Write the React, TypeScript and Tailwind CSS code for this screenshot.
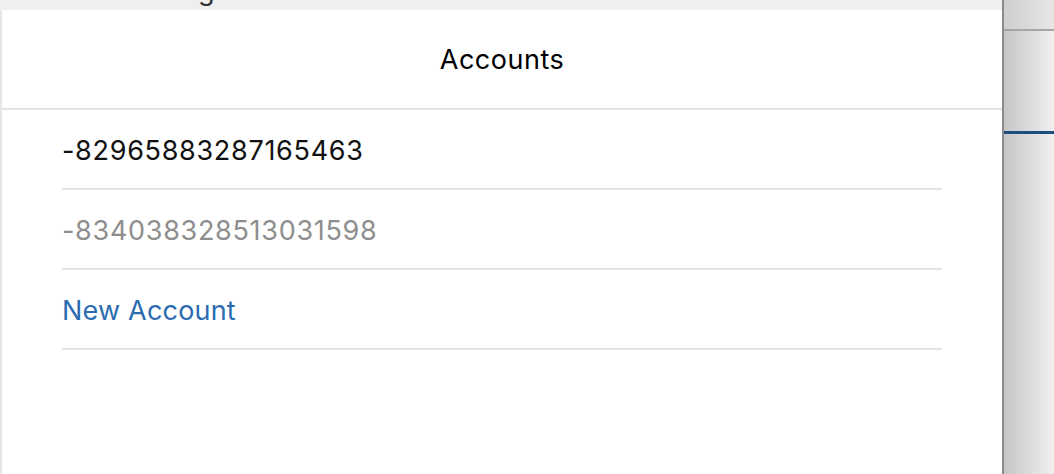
import React from "react";

export default function App() {
  const rows = [
    { label: "-82965883287165463", cls: "text-[#111111] tracking-[0.7px]" },
    { label: "-834038328513031598", cls: "text-[#8e8e8e] tracking-[0.7px]" },
    { label: "New Account", cls: "text-[#2b6cb0] tracking-[0.2px]" },
  ];
  return (
    <div
      className="flex w-[1054px] h-[474px] overflow-hidden bg-white"
      style={{ fontFamily: "Inter, 'Liberation Sans', sans-serif" }}
    >
      <div className="flex flex-col w-[1002px] shrink-0">
        <div className="h-[10px] bg-[#efefef] overflow-hidden shrink-0">
          <div className="-mt-[24px] pl-[198px] text-[27px] leading-[30px] text-[#333]">g</div>
        </div>
        <div className="flex-1 flex flex-col bg-white border-l-2 border-[#e6e6e6]">
          <div className="h-[100px] flex items-center justify-center border-b-2 border-[#e3e3e3] text-[27px] tracking-[0.5px] text-black">
            <span className="pt-[2px]">Accounts</span>
          </div>
          <div className="pl-[60px] pr-[60px]">
            {rows.map((r) => (
              <div
                key={r.label}
                className={`h-[80px] flex items-center border-b-2 border-[#e3e3e3] text-[27px] ${r.cls}`}
              >
                <span className="pt-[4px]">{r.label}</span>
              </div>
            ))}
          </div>
        </div>
      </div>
      <div className="flex-1 flex flex-col border-l-2 border-[#8c8c8c] bg-gradient-to-r from-[#c6c6c6] to-[#f0f0f0]">
        <div className="h-[31px] border-b-2 border-[#a6a6a6] bg-gradient-to-r from-[#cfcfcf] to-[#e6e6e6]" />
        <div className="h-[100px]" />
        <div className="h-[3px] bg-[#1f4d7f]" />
      </div>
    </div>
  );
}
